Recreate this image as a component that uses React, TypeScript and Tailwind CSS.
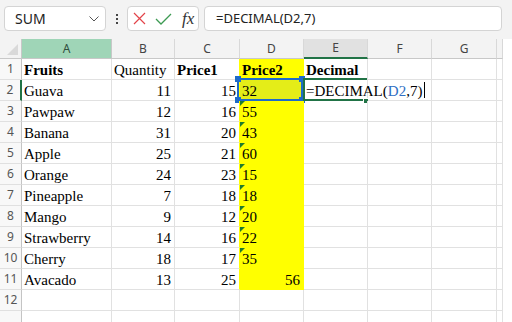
import React from 'react';

type Val = string | number | null;

const COLS = ['A', 'B', 'C', 'D', 'E', 'F', 'G', ''];

const ROWS: Val[][] = [
  ['Fruits', 'Quantity', 'Price1', 'Price2', 'Decimal'],
  ['Guava', 11, 15, '32', null],
  ['Pawpaw', 12, 16, '55'],
  ['Banana', 31, 20, '43'],
  ['Apple', 25, 21, '60'],
  ['Orange', 24, 23, '15'],
  ['Pineapple', 7, 18, '18'],
  ['Mango', 9, 12, '20'],
  ['Strawberry', 14, 16, '22'],
  ['Cherry', 18, 17, '35'],
  ['Avacado', 13, 25, 56],
  [],
  [],
];

const BOLD_HEAD = new Set([0, 2, 3, 4]);

function NameBox() {
  return (
    <div className="flex h-[25px] w-[102px] items-center justify-between rounded-[4px] border border-[#d4d4d4] bg-white pl-[10px] pr-[6px]">
      <span className="text-[14px] text-[#222]">SUM</span>
      <svg width="10" height="6" viewBox="0 0 10 6">
        <polyline points="0.5,0.5 5,5 9.5,0.5" fill="none" stroke="#555" strokeWidth="1" />
      </svg>
    </div>
  );
}

function FxBox() {
  return (
    <div className="flex h-[25px] w-[72px] items-center rounded-[4px] border border-[#d4d4d4] bg-white pl-[5px]">
      <svg width="13" height="13" viewBox="0 0 13 13">
        <path d="M1 1 L12 12 M12 1 L1 12" stroke="#e2444a" strokeWidth="1.2" />
      </svg>
      <svg className="ml-[9px]" width="17" height="12" viewBox="0 0 17 12">
        <polyline points="1,6 6,11 16,1" fill="none" stroke="#3c9a52" strokeWidth="1.3" />
      </svg>
      <span className="ml-[10px] font-['Liberation_Serif',serif] text-[17px] italic leading-none text-[#333]">fx</span>
    </div>
  );
}

function TopBar() {
  return (
    <div className="flex h-[39px] items-start bg-[#f3f3f3] pl-[4px] pt-[6px]">
      <NameBox />
      <div className="flex h-[25px] w-[21px] flex-col items-center justify-center gap-[2px]">
        <div className="h-[2px] w-[2px] bg-[#444]" />
        <div className="h-[2px] w-[2px] bg-[#444]" />
        <div className="h-[2px] w-[2px] bg-[#444]" />
      </div>
      <FxBox />
      <div className="ml-[5px] flex h-[25px] w-[298px] items-center rounded-[4px] border border-[#d4d4d4] bg-white pl-[11px]">
        <span className="text-[13px] text-[#222]">=DECIMAL(D2,7)</span>
      </div>
    </div>
  );
}

function Corner() {
  return (
    <div className="relative border-b border-r border-[#c8c8c8] bg-[#f3f3f3]">
      <div className="absolute bottom-[3px] right-[3px] h-0 w-0 border-b-[11px] border-l-[11px] border-b-[#d9d9d9] border-l-transparent" />
    </div>
  );
}

function ColHeader({ label, idx }: { label: string; idx: number }) {
  const selected = idx === 0;
  const active = idx === 4;
  return (
    <div
      className={
        'flex items-center justify-center border-r text-[12px] ' +
        (selected
          ? 'border-b border-[#c8c8c8] bg-[#9fd5b7] text-[#2f4f3d]'
          : active
            ? 'border-b-2 border-r-[#d8d8d8] border-b-[#217346] bg-[#e1e1e1] text-[#444]'
            : 'border-b border-r-[#d8d8d8] border-b-[#c8c8c8] bg-[#f3f3f3] text-[#444]')
      }
    >
      {label}
    </div>
  );
}

function RowHeader({ n }: { n: number }) {
  const active = n === 2;
  return (
    <div
      className={
        'flex items-center justify-center border-b border-b-[#e0e0e0] bg-[#f8f8f8] text-[12px] text-[#555] ' +
        (active ? 'border-r-2 border-r-[#217346]' : 'border-r border-r-[#c4c4c4]')
      }
    >
      {n <= 12 ? n : ''}
    </div>
  );
}

function Cell({ r, c, v }: { r: number; c: number; v: Val }) {
  const yellow = c === 3 && r <= 10;
  const beforeYellow = c === 2 && r <= 10;
  const isNum = typeof v === 'number';
  const bold = r === 0 && BOLD_HEAD.has(c);
  const flagged = c === 3 && r >= 2 && r <= 9;

  let cls = 'relative flex items-end border-b border-r leading-[17px] whitespace-nowrap ';
  if (yellow) {
    cls += r === 1 ? 'bg-[#e4ed18] border-[#e4ed18] ' : 'bg-[#ffff00] border-[#ffff00] ';
  } else if (beforeYellow) {
    cls += 'border-b-[#e1e1e1] border-r-[#ffff00] ';
  } else {
    cls += 'border-[#e1e1e1] ';
  }
  cls += isNum ? 'justify-end pr-[3px] ' : 'justify-start pl-[2px] ';
  if (bold) cls += 'font-bold ';

  return (
    <div className={cls}>
      {flagged && (
        <div className="absolute left-0 top-0 h-0 w-0 border-r-[5px] border-t-[5px] border-r-transparent border-t-[#1e7b2e]" />
      )}
      {v !== null && v !== undefined && <span>{v}</span>}
      {r === 1 && c === 3 && (
        <div className="absolute -bottom-[1px] -left-[3px] -top-[2px] right-[0px] border-2 border-[#1d6bc9]">
          <div className="absolute -left-[4px] -top-[4px] h-[6px] w-[6px] bg-[#1d6bc9]" />
          <div className="absolute -right-[4px] -top-[4px] h-[6px] w-[6px] bg-[#1d6bc9]" />
          <div className="absolute -bottom-[4px] -left-[4px] h-[6px] w-[6px] bg-[#1d6bc9]" />
          <div className="absolute -bottom-[4px] -right-[4px] h-[6px] w-[6px] bg-[#1d6bc9]" />
        </div>
      )}
      {r === 1 && c === 4 && (
        <>
          <div className="pointer-events-none absolute -bottom-[1px] -left-[1px] -top-[2px] right-[0px] border-b-2 border-l-2 border-t-2 border-[#217346]" />
          <div className="absolute -bottom-[4px] -right-[2px] h-[6px] w-[6px] border border-white bg-[#217346]" />
          <span className="relative z-10 overflow-visible">
            =DECIMAL(<span className="text-[#2f6fc4]">D2</span>,7)
            <span className="ml-[2px] inline-block h-[16px] w-[1px] translate-y-[2px] bg-black" />
          </span>
        </>
      )}
    </div>
  );
}

export default function App() {
  return (
    <div className="h-[322px] w-[512px] overflow-hidden bg-white font-['Noto_Sans',sans-serif]">
      <TopBar />
      <div className="grid w-[503px] grid-cols-[22px_90px_63px_65px_64px_64px_64px_65px_6px] grid-rows-[20px_repeat(13,21px)]">
        <Corner />
        {COLS.map((l, i) => (
          <ColHeader key={i} label={l} idx={i} />
        ))}
        {ROWS.map((row, r) => (
          <React.Fragment key={r}>
            <RowHeader n={r + 1} />
            <div className="contents font-['Liberation_Serif',serif] text-[15px] text-black">
              {COLS.map((_, c) => (
                <Cell key={c} r={r} c={c} v={row[c] ?? null} />
              ))}
            </div>
          </React.Fragment>
        ))}
      </div>
    </div>
  );
}
